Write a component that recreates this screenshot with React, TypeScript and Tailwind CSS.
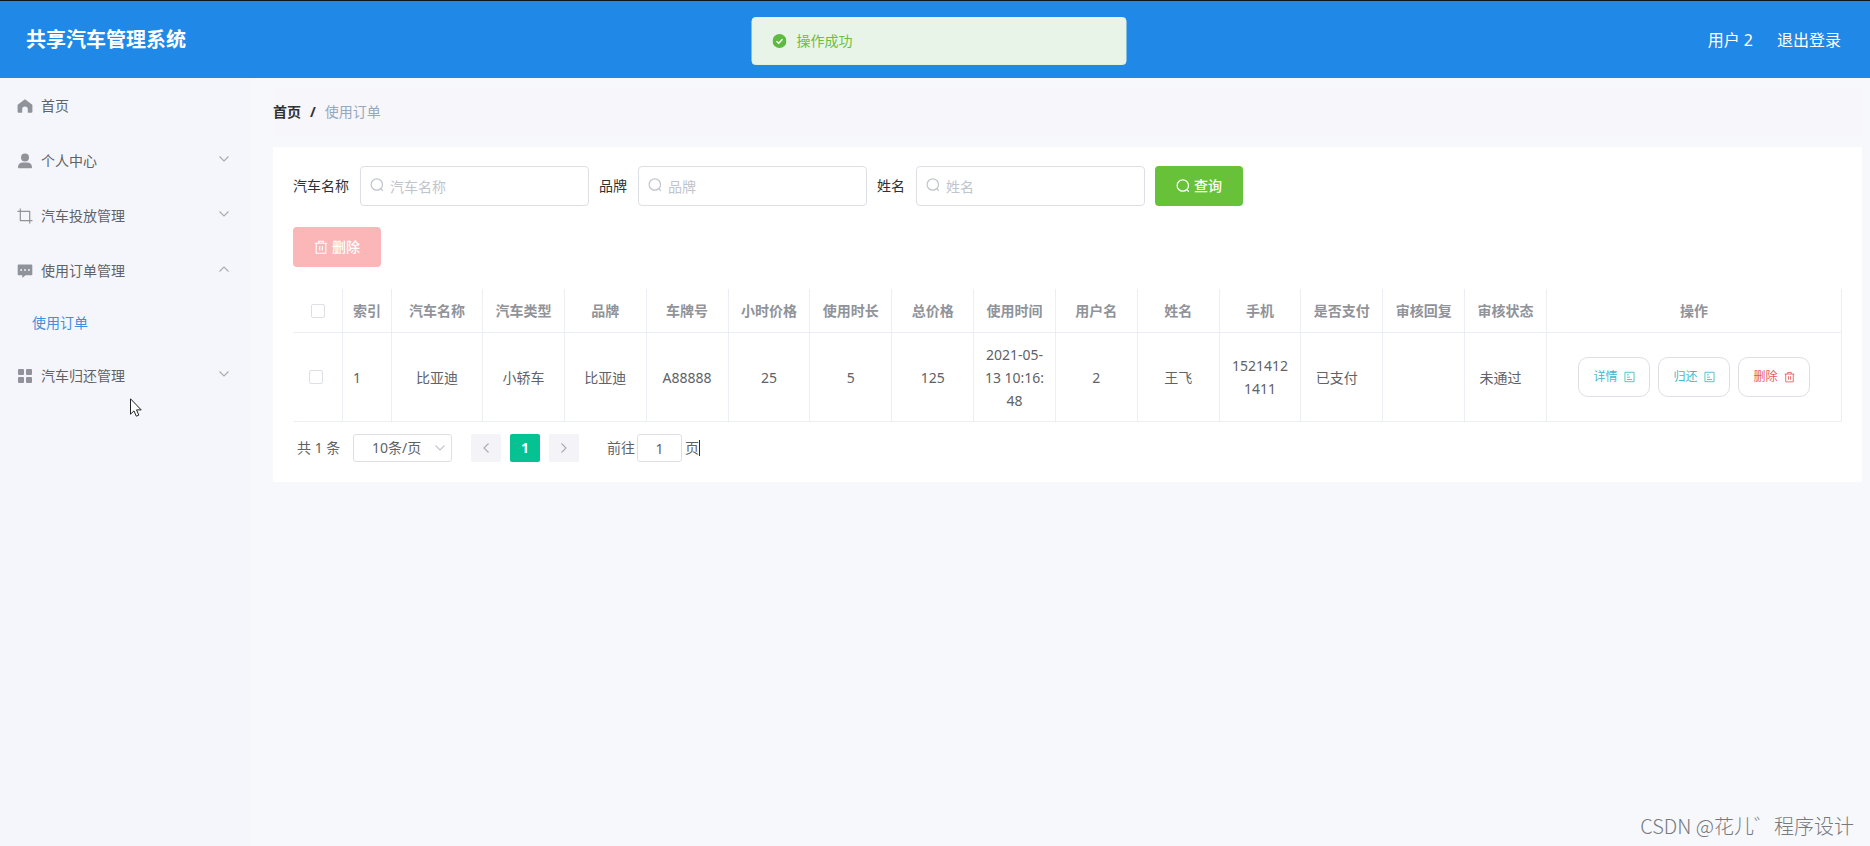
import { useState } from "react";
import type { ReactNode } from "react";

type IconProps = { className?: string };

type MenuItem = {
  label: string;
  icon: ReactNode;
  open?: boolean;
  expandable?: boolean;
  children?: string[];
};

function HomeIcon() {
  return (
    <svg viewBox="0 0 16 16" className="w-4 h-4" fill="currentColor">
      <path d="M8 1.2 15 6.6a1 1 0 0 1 .4.8v6.4a1 1 0 0 1-1 1h-3.600v-3.600a2.800 2.800 0 0 0-5.600 0v3.600H1.600a1 1 0 0 1-1-1V7.400a1 1 0 0 1 .4-.8z" />
    </svg>
  );
}

function UserIcon() {
  return (
    <svg viewBox="0 0 16 16" className="w-4 h-4" fill="currentColor">
      <circle cx="8" cy="4.600" r="4" />
      <path d="M1 14.200c0-3 2-4.700 4.600-4.700h4.800c2.600 0 4.600 1.700 4.600 4.700 0 .6-.4 1-1 1H2c-.6 0-1-.4-1-1z" />
    </svg>
  );
}

function CropIcon() {
  return (
    <svg viewBox="0 0 16 16" className="w-4 h-4" fill="none" stroke="currentColor" strokeWidth="1.200">
      <path d="M3.300.5v12.200h12.200M.5 3.300h12.200v12.200" />
    </svg>
  );
}

function MessageIcon() {
  return (
    <svg viewBox="0 0 16 16" className="w-4 h-4">
      <path fill="currentColor" d="M1.500 1.500h13a.8.800 0 0 1 .8.800v9.200a.8.800 0 0 1-.8.800H8.500L5.300 15v-2.700H1.500a.8.800 0 0 1-.8-.8V2.300a.8.800 0 0 1 .8-.8z" />
      <path fill="#f5f6fc" d="M3.200 6.200h1.800v1.600H3.200zM7.100 6.200h1.800v1.600H7.100zM11 6.200h1.800v1.600H11z" />
    </svg>
  );
}

function MenuGridIcon() {
  return (
    <svg viewBox="0 0 16 16" className="w-4 h-4" fill="currentColor">
      <rect x="1" y="1" width="6" height="6" rx="1" />
      <rect x="9" y="1" width="6" height="6" rx="1" />
      <rect x="1" y="9" width="6" height="6" rx="1" />
      <rect x="9" y="9" width="6" height="6" rx="1" />
    </svg>
  );
}

function Chevron({ className }: IconProps) {
  return (
    <svg viewBox="0 0 12 12" className={className} fill="none" stroke="currentColor" strokeWidth="1.100">
      <path d="M1.500 3.500 6 8l4.500-4.500" />
    </svg>
  );
}

function SearchIcon({ className }: IconProps) {
  return (
    <svg viewBox="0 0 14 14" className={className} fill="none" stroke="currentColor" strokeWidth="1.200">
      <circle cx="6.800" cy="6.500" r="5.700" />
      <path d="m10.800 10.500 2 2.300" />
    </svg>
  );
}

function TrashIcon({ className }: IconProps) {
  return (
    <svg viewBox="0 0 14 14" className={className} fill="none" stroke="currentColor" strokeWidth="1.100">
      <path d="M.8 3.300h12.400M2.200 3.300v9.900h9.600V3.300M4.700 3.100V1.200h4.600v1.900M5.700 6v4.500M8.300 6v4.500" />
    </svg>
  );
}

function TicketIcon({ className }: IconProps) {
  return (
    <svg viewBox="0 0 14 14" className={className} fill="none" stroke="currentColor" strokeWidth="1.100">
      <path d="M1.200 1h11.600v12H1.200zM3.800 4.300h2.400M3.800 7.200h4M3.800 10.200h6.400" />
    </svg>
  );
}

const MENU: MenuItem[] = [
  { label: "首页", icon: <HomeIcon /> },
  { label: "个人中心", icon: <UserIcon />, expandable: true },
  { label: "汽车投放管理", icon: <CropIcon />, expandable: true },
  { label: "使用订单管理", icon: <MessageIcon />, expandable: true, open: true, children: ["使用订单"] },
  { label: "汽车归还管理", icon: <MenuGridIcon />, expandable: true },
];

const FILTERS = [
  { id: "car-name", label: "汽车名称" },
  { id: "brand", label: "品牌" },
  { id: "real-name", label: "姓名" },
];

const COLUMNS = [
  "汽车类型",
  "品牌",
  "车牌号",
  "小时价格",
  "使用时长",
  "总价格",
  "使用时间",
  "用户名",
  "姓名",
  "手机",
  "是否支付",
  "审核回复",
  "审核状态",
];

const ORDERS = [
  {
    id: 1,
    name: "比亚迪",
    cells: ["小轿车", "比亚迪", "A88888", "25", "5", "125", "2021-05-13 10:16:48", "2", "王飞", "15214121411"],
    paid: "已支付",
    reply: "",
    status: "未通过",
  },
];

const CHECKBOX = "block w-3.5 h-3.5 appearance-none rounded-xs border border-[#dcdfe6] bg-white checked:bg-[#409eff]";
const CELL = "border-r border-b border-[#ebeef5] px-2.5";

function Header() {
  return (
    <header className="relative flex h-[78px] items-center justify-between border-t border-[#10161d] bg-[#2088e6] pl-[26px] pr-[29px] text-white">
      <h1 className="text-xl font-bold">共享汽车管理系统</h1>
      <div className="flex gap-6 text-base">
        <span>用户 2</span>
        <button type="button">退出登录</button>
      </div>
      <div
        role="status"
        className="absolute left-1/2 top-4 ml-1 flex h-12 w-[375px] -translate-x-1/2 items-center gap-2.5 rounded border border-[#e1f3d8] bg-[#e9f4e9] pl-5 text-sm text-[#67c23a]"
      >
        <svg viewBox="0 0 14 14" className="w-3.5 h-3.5">
          <circle cx="7" cy="7" r="7" fill="#5fba41" />
          <path d="m4 7.200 2.200 2.100L10 5.300" fill="none" stroke="#fff" strokeWidth="1.300" />
        </svg>
        操作成功
      </div>
    </header>
  );
}

function Sidebar() {
  return (
    <nav className="w-[250px] shrink-0 bg-[#f5f6fc] text-sm text-[#606266]">
      {MENU.map((item) => (
        <div key={item.label}>
          <button type="button" className="flex h-[55px] w-full items-center pl-[17px] pr-5 text-left">
            <span className="mr-2 text-[#909399]">{item.icon}</span>
            {item.label}
            {item.expandable && (
              <Chevron
                className={
                  item.open
                    ? "ml-auto mb-1 w-3 h-3 rotate-180 text-[#a9abb0]"
                    : "ml-auto mb-1 w-3 h-3 text-[#a9abb0]"
                }
              />
            )}
          </button>
          {item.children?.map((child) => (
            <a key={child} href="#" className="flex h-[50px] items-center pl-8 text-[#3f8fdb]">
              {child}
            </a>
          ))}
        </div>
      ))}
    </nav>
  );
}

function SearchForm() {
  return (
    <form className="flex flex-wrap items-center gap-2.5" onSubmit={(e) => e.preventDefault()}>
      {FILTERS.map((f) => (
        <div key={f.id} className="flex items-center gap-[11px]">
          <label htmlFor={f.id}>{f.label}</label>
          <div className="relative">
            <SearchIcon className="absolute left-2.5 top-3 w-3.5 h-3.5 text-[#c0c4cc]" />
            <input
              id={f.id}
              type="text"
              placeholder={f.label}
              className="block h-10 w-[229px] rounded border border-[#dcdfe6] bg-white pl-[29px] pr-3 placeholder:text-[#c0c4cc]"
            />
          </div>
        </div>
      ))}
      <button type="submit" className="flex h-10 w-[88px] items-center justify-center gap-1 rounded bg-[#67c23a] font-medium text-white">
        <SearchIcon className="w-3.5 h-3.5" />
        查询
      </button>
    </form>
  );
}

function RowButton({ label, danger }: { label: string; danger?: boolean }) {
  return (
    <button
      type="button"
      className={
        danger
          ? "flex h-10 w-[72px] items-center justify-center gap-1.5 rounded-[10px] border border-[#dcdfe6] text-xs text-[#e75a5a]"
          : "flex h-10 w-[72px] items-center justify-center gap-1.5 rounded-[10px] border border-[#dcdfe6] text-xs text-[#3fbacb]"
      }
    >
      {label}
      {danger ? <TrashIcon className="w-[11px] h-3" /> : <TicketIcon className="w-[11px] h-3" />}
    </button>
  );
}

function OrderTable() {
  return (
    <table className="w-full table-fixed border-separate border-spacing-0 text-center text-sm leading-[23px] text-[#606266]">
      <colgroup>
        <col className="w-[50px]" />
        <col className="w-[49px]" />
        <col className="w-[91px]" />
        {COLUMNS.map((c) => (
          <col key={c} />
        ))}
        <col className="w-[295px]" />
      </colgroup>
      <thead className="text-[#909399]">
        <tr className="h-11">
          <th className={`${CELL} pl-[18px]`}>
            <input type="checkbox" aria-label="全选" className={CHECKBOX} />
          </th>
          <th className={`${CELL} text-left`}>索引</th>
          <th className={CELL}>汽车名称</th>
          {COLUMNS.map((c) => (
            <th key={c} className={CELL}>
              {c}
            </th>
          ))}
          <th className={CELL}>操作</th>
        </tr>
      </thead>
      <tbody>
        {ORDERS.map((o) => (
          <tr key={o.id} className="h-[89px]">
            <td className={`${CELL} pl-4`}>
              <input type="checkbox" aria-label={`选择 ${o.id}`} className={CHECKBOX} />
            </td>
            <td className={`${CELL} text-left`}>{o.id}</td>
            <td className={CELL}>{o.name}</td>
            {o.cells.map((value, i) => (
              <td key={COLUMNS[i]} className={`${CELL} break-all`}>
                {value}
              </td>
            ))}
            <td className={`${CELL} pr-5`}>{o.paid}</td>
            <td className={CELL}>{o.reply}</td>
            <td className={`${CELL} pr-5`}>{o.status}</td>
            <td className={CELL}>
              <div className="flex justify-center gap-2">
                <RowButton label="详情" />
                <RowButton label="归还" />
                <RowButton label="删除" danger />
              </div>
            </td>
          </tr>
        ))}
      </tbody>
    </table>
  );
}

function Pagination() {
  const [page, setPage] = useState("1");

  return (
    <div className="flex h-7 items-center text-sm text-[#606266]">
      <span className="ml-1 w-14">共 1 条</span>
      <div className="relative">
        <select
          aria-label="每页条数"
          className="block h-7 w-[99px] appearance-none rounded-[3px] border border-[#dcdfe6] bg-white pl-[18px] pr-6 text-sm"
        >
          <option>10条/页</option>
        </select>
        <Chevron className="pointer-events-none absolute right-1.5 top-2 w-3 h-3 text-[#c0c4cc]" />
      </div>
      <div className="ml-[19px] flex gap-[9px]">
        <button type="button" aria-label="上一页" className="flex h-7 w-[30px] items-center justify-center rounded-xs bg-[#f4f4f8] text-[#a8abb2]">
          <Chevron className="w-3 h-3 rotate-90" />
        </button>
        <button type="button" className="h-7 w-[30px] rounded-xs bg-[#04c292] font-bold text-white">
          1
        </button>
        <button type="button" aria-label="下一页" className="flex h-7 w-[30px] items-center justify-center rounded-xs bg-[#f4f4f8] text-[#a8abb2]">
          <Chevron className="w-3 h-3 -rotate-90" />
        </button>
      </div>
      <label htmlFor="jump" className="ml-7">
        前往
      </label>
      <input
        id="jump"
        type="text"
        value={page}
        onChange={(e) => setPage(e.target.value)}
        className="ml-0.5 mr-[3px] h-7 w-[45px] rounded-[3px] border border-[#dcdfe6] bg-white text-center"
      />
      <span className="h-4 border-r border-[#303133] leading-4">页</span>
    </div>
  );
}

export default function App() {
  return (
    <div className="relative flex min-h-screen flex-col bg-[#f7f8fc] font-['Noto_Sans','Noto_Sans_CJK_SC',sans-serif]">
      <Header />
      <div className="flex flex-1">
        <Sidebar />
        <main className="min-w-0 flex-1 pb-6 pl-[23px] pr-2 pt-[9px] text-sm text-[#303133]">
          <div className="mb-[11px] flex h-[49px] items-center gap-[9px] bg-[#f6f6fb]">
            <a href="#" className="font-bold">
              首页
            </a>
            <span className="font-bold">/</span>
            <span className="text-[#97a8be]">使用订单</span>
          </div>
          <section className="bg-white px-5 pb-5 pt-[19px]">
            <SearchForm />
            <button
              type="button"
              disabled
              className="mb-[22px] mt-[21px] flex h-10 w-[88px] items-center justify-center gap-1 rounded bg-[#fbb6b8] font-medium text-white"
            >
              <TrashIcon className="w-3.5 h-3.5" />
              删除
            </button>
            <OrderTable />
            <div className="pt-3">
              <Pagination />
            </div>
          </section>
        </main>
      </div>

      <svg viewBox="0 0 12 19" className="pointer-events-none absolute left-[130px] top-[398px] h-[19px] w-3">
        <path d="M.5.800v15.400l3.500-3.300 2.300 5.300 2.500-1.100-2.300-5.200h4.700z" fill="#fff" stroke="#222" strokeWidth="1" />
      </svg>
      <div className="pointer-events-none absolute bottom-1.5 right-4 font-['Noto_Sans_CJK_SC',sans-serif] text-xl leading-7 font-light text-[#77797d]">
        CSDN @花儿゛程序设计
      </div>
    </div>
  );
}
